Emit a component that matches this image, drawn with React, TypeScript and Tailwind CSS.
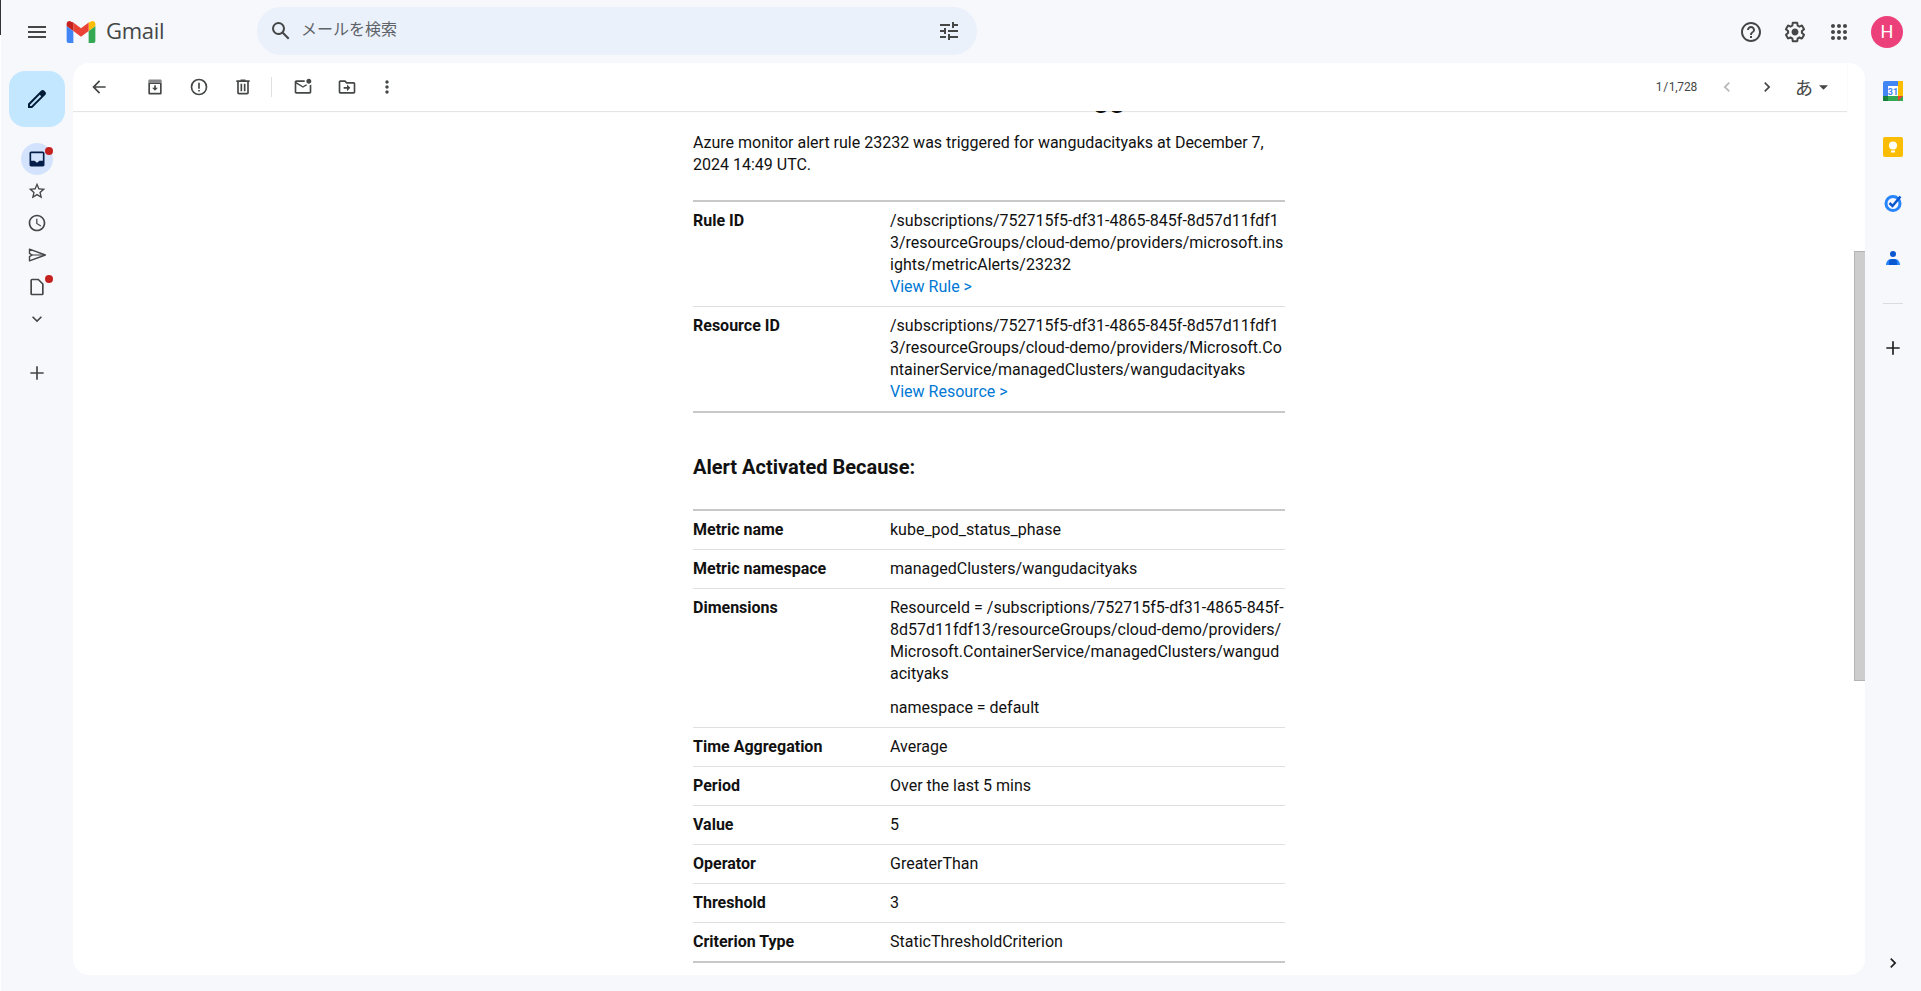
import React from "react";

const I = ({ d, size = 20, className = "", fill = "#444746", vb = "0 0 24 24" }: { d: string; size?: number; className?: string; fill?: string; vb?: string }) => (
  <svg width={size} height={size} viewBox={vb} className={className} fill={fill}><path d={d} fillRule="evenodd" /></svg>
);

const P = {
  menu: "M3 18h18v-2H3v2zm0-5h18v-2H3v2zm0-7v2h18V6H3z",
  search: "M20.49 19l-5.73-5.73C15.53 12.2 16 10.91 16 9.5A6.5 6.5 0 1 0 9.5 16c1.41 0 2.7-.47 3.77-1.24L19 20.49 20.49 19zM5 9.5C5 7.01 7.01 5 9.5 5S14 7.01 14 9.5 11.99 14 9.5 14 5 11.99 5 9.5z",
  tune: "M3 17v2h6v-2H3zM3 5v2h10V5H3zm10 16v-2h8v-2h-8v-2h-2v6h2zM7 9v2H3v2h4v2h2V9H7zm14 4v-2H11v2h10zm-6-4h2V7h4V5h-4V3h-2v6z",
  help: "M11 18h2v-2h-2v2zm1-16C6.48 2 2 6.48 2 12s4.48 10 10 10 10-4.48 10-10S17.52 2 12 2zm0 18c-4.41 0-8-3.59-8-8s3.59-8 8-8 8 3.59 8 8-3.59 8-8 8zm0-14c-2.21 0-4 1.79-4 4h2c0-1.1.9-2 2-2s2 .9 2 2c0 2-3 1.75-3 5h2c0-2.25 3-2.5 3-5 0-2.21-1.79-4-4-4z",
  gear: "M13.85 22.25h-3.7c-.74 0-1.36-.54-1.45-1.27l-.27-1.89c-.27-.14-.53-.29-.79-.46l-1.8.72c-.7.26-1.47-.03-1.81-.65L2.2 15.53c-.35-.66-.2-1.44.36-1.88l1.53-1.19c-.01-.15-.02-.3-.02-.46 0-.15.01-.31.02-.46l-1.52-1.19c-.59-.45-.74-1.26-.37-1.88l1.85-3.19c.34-.62 1.11-.9 1.79-.63l1.81.73c.26-.17.52-.32.78-.46l.27-1.91c.09-.7.71-1.25 1.44-1.25h3.7c.74 0 1.36.54 1.45 1.27l.27 1.89c.27.14.53.29.79.46l1.8-.72c.71-.26 1.48.03 1.82.65l1.84 3.18c.36.66.2 1.44-.36 1.88l-1.52 1.19c.01.15.02.3.02.46s-.01.31-.02.46l1.52 1.19c.56.45.72 1.23.37 1.86l-1.86 3.22c-.34.62-1.11.9-1.8.63l-1.8-.72c-.26.17-.52.32-.78.46l-.27 1.91c-.1.68-.72 1.22-1.46 1.22zm-3.23-2h2.76l.37-2.55.53-.22c.44-.18.88-.44 1.34-.78l.45-.34 2.38.96 1.38-2.4-2.03-1.58.07-.56c.03-.26.06-.51.06-.78s-.03-.53-.06-.78l-.07-.56 2.03-1.58-1.39-2.4-2.39.96-.45-.35c-.42-.32-.87-.58-1.33-.77l-.52-.22-.37-2.55h-2.76l-.37 2.55-.53.21c-.44.19-.88.44-1.34.79l-.45.33-2.38-.95-1.39 2.39 2.03 1.58-.07.56a7 7 0 0 0-.06.79c0 .26.02.53.06.78l.07.56-2.03 1.58 1.38 2.4 2.39-.96.45.35c.43.33.86.58 1.33.77l.53.22.38 2.55zM12 15.5c1.93 0 3.5-1.57 3.5-3.5S13.93 8.5 12 8.5 8.5 10.07 8.5 12s1.57 3.5 3.5 3.5z",
  apps: "M6 8c1.1 0 2-.9 2-2s-.9-2-2-2-2 .9-2 2 .9 2 2 2zm6 12c1.1 0 2-.9 2-2s-.9-2-2-2-2 .9-2 2 .9 2 2 2zm-6 0c1.1 0 2-.9 2-2s-.9-2-2-2-2 .9-2 2 .9 2 2 2zm0-6c1.1 0 2-.9 2-2s-.9-2-2-2-2 .9-2 2 .9 2 2 2zm6 0c1.1 0 2-.9 2-2s-.9-2-2-2-2 .9-2 2 .9 2 2 2zm4-8c0 1.1.9 2 2 2s2-.9 2-2-.9-2-2-2-2 .9-2 2zm-4 2c1.1 0 2-.9 2-2s-.9-2-2-2-2 .9-2 2 .9 2 2 2zm6 6c1.1 0 2-.9 2-2s-.9-2-2-2-2 .9-2 2 .9 2 2 2zm0 6c1.1 0 2-.9 2-2s-.9-2-2-2-2 .9-2 2 .9 2 2 2z",
  pencil: "M20.41 4.94l-1.35-1.35c-.78-.78-2.05-.78-2.83 0L3 16.82V21h4.18L20.41 7.77c.79-.78.79-2.05 0-2.83zM6.41 19H5v-1.36l9.82-9.82 1.41 1.41L6.41 19z",
  back: "M20 11H7.83l5.59-5.59L12 4l-8 8 8 8 1.41-1.41L7.83 13H20v-2z",
  report: "M12 2a10 10 0 1 0 0 20 10 10 0 0 0 0-20zm0 2a8 8 0 1 1 0 16 8 8 0 0 1 0-16zM11 7h2v7h-2zm0 8.5h2v2h-2z",
  trash: "M15 4V3H9v1H4v2h1v13c0 1.1.9 2 2 2h10c1.1 0 2-.9 2-2V6h1V4h-5zM7 6h10v13H7zM9 8h2v9H9zm4 0h2v9h-2z",
  unread: "M22 8.98V18c0 1.1-.9 2-2 2H4c-1.1 0-2-.9-2-2V6c0-1.1.9-2 2-2h10.1c-.06.32-.1.66-.1 1 0 .34.04.68.1 1H4l8 5 3.67-2.29c.47.43 1.02.76 1.63.98L12 13 4 8v10h16V9.9c.74-.15 1.42-.48 2-.92zM16 5c0 1.66 1.34 3 3 3s3-1.34 3-3-1.34-3-3-3-3 1.34-3 3z",
  move: "M20 6h-8l-2-2H4c-1.1 0-1.99.9-1.99 2L2 18c0 1.1.9 2 2 2h16c1.1 0 2-.9 2-2V8c0-1.1-.9-2-2-2zM4 6h5.17l2 2H20v10H4zM12 14H8v-2h4V9l4 4-4 4z",
  more: "M12 8c1.1 0 2-.9 2-2s-.9-2-2-2-2 .9-2 2 .9 2 2 2zm0 2c-1.1 0-2 .9-2 2s.9 2 2 2 2-.9 2-2-.9-2-2-2zm0 6c-1.1 0-2 .9-2 2s.9 2 2 2 2-.9 2-2-.9-2-2-2z",
  left: "M15.41 16.59L10.83 12l4.58-4.59L14 6l-6 6 6 6 1.41-1.41z",
  right: "M8.59 16.59L13.17 12 8.59 7.41 10 6l6 6-6 6-1.41-1.41z",
  down: "M7.41 8.59L12 13.17l4.59-4.58L18 10l-6 6-6-6 1.41-1.41z",
  inbox: "M19 3H5c-1.1 0-2 .9-2 2v14c0 1.1.9 2 2 2h14c1.1 0 2-.9 2-2V5c0-1.1-.9-2-2-2zM19 14h-4l-3 2.5L9 14H5V5h14z",
  star: "M22 9.24l-7.19-.62L12 2 9.19 8.63 2 9.24l5.46 4.73L5.82 21 12 17.27 18.18 21l-1.63-7.03L22 9.24zM12 15.4l-3.76 2.27 1-4.28-3.32-2.88 4.38-.38L12 6.1l1.71 4.04 4.38.38-3.32 2.88 1 4.28L12 15.4z",
  clock: "M11.99 2C6.47 2 2 6.48 2 12s4.47 10 9.99 10C17.52 22 22 17.52 22 12S17.52 2 11.99 2zM12 4c4.42 0 8 3.58 8 8s-3.58 8-8 8-8-3.58-8-8 3.58-8 8-8zM11 7h1.5v5.25l4.5 2.67-.75 1.23L11 13z",
  file: "M14 2H6a2 2 0 0 0-2 2v16a2 2 0 0 0 2 2h12a2 2 0 0 0 2-2V8zM18 20H6V4h7.17L18 8.83z",
  plus: "M20 13h-7v7h-2v-7H4v-2h7V4h2v7h7v2z",
};

const TB = ({ d, size = 20, cls = "w-11", fill }: { d: string; size?: number; cls?: string; fill?: string }) => (
  <button className={`h-11 flex items-center justify-center ${cls}`}><I d={d} size={size} fill={fill} /></button>
);

const ArchiveIcon = () => (
  <button className="h-11 w-11 flex items-center justify-center">
    <svg width="20" height="20" viewBox="0 0 24 24">
      <path d="M4 4.5A1.5 1.5 0 0 1 5.5 3h13A1.5 1.5 0 0 1 20 4.5V7H4z" fill="#85878a" />
      <path d="M4 7h16v12.5A1.5 1.5 0 0 1 18.5 21h-13A1.5 1.5 0 0 1 4 19.5zM6 8.5V19h12V8.5zM11 10v3H8.5l3.5 3.5 3.5-3.5H13v-3z" fill="#444746" fillRule="evenodd" />
    </svg>
  </button>
);

const SendIcon = () => (
  <svg width="20" height="20" viewBox="0 0 24 24" fill="none" stroke="#444746" strokeWidth="1.7" strokeLinejoin="round">
    <path d="M3 5l19 7-19 7v-5l3-2-3-2z" />
    <path d="M6 12h15" strokeWidth="1.3" />
  </svg>
);

const Row = ({ k, children, last }: { k: string; children: React.ReactNode; last?: boolean }) => (
  <div className={`flex py-2 ${last ? "" : "border-b border-[#e0e0e0]"}`}>
    <div className="w-[197px] shrink-0 font-bold">{k}</div>
    <div className="flex-1 min-w-0 break-all">{children}</div>
  </div>
);

const A = ({ children }: { children: React.ReactNode }) => <a className="block text-[#0078d4]">{children}</a>;

const RailItem = ({ d, badge, active, icon }: { d?: string; badge?: boolean; active?: boolean; icon?: React.ReactNode }) => (
  <div className={`relative w-8 h-8 rounded-full flex items-center justify-center ${active ? "bg-[#d3e3fd]" : ""}`}>
    {icon ?? <I d={d as string} size={20} fill={active ? "#041e49" : "#444746"} />}
    {badge && <span className="absolute top-1 right-0 w-2 h-2 rounded-full bg-[#c5221f]" />}
  </div>
);

export default function App() {
  return (
    <div className="relative w-[1921px] h-[991px] bg-[#f6f8fc] overflow-hidden flex flex-col font-['Roboto',sans-serif] text-[#111]">
      <div className="absolute left-0 top-0 w-px h-[35px] bg-[#333]" />
      <div className="absolute left-0 top-[35px] bottom-0 w-px bg-white" />
      <header className="h-[63px] shrink-0 flex items-center">
        <div className="w-[73px] flex justify-center pl-[1px]"><I d={P.menu} size={24} /></div>
        <div className="w-[184px] flex items-center">
          <svg width="30" height="22" viewBox="0 0 30 23" className="-ml-[7px] mr-[10px]">
            <path d="M2 23h5V10.5L0 5.2V21a2 2 0 0 0 2 2z" fill="#4285f4" />
            <path d="M23 23h5a2 2 0 0 0 2-2V5.2l-7 5.3z" fill="#34a853" />
            <path d="M23 1.5v9l7-5.3V3c0-2.4-2.8-3.8-4.8-2.3z" fill="#fbbc04" />
            <path d="M7 10.5V1.5l8 6 8-6v9l-8 6z" fill="#ea4335" />
            <path d="M0 3v2.2l7 5.3v-9L4.8.7C2.8-.8 0 .6 0 3z" fill="#c5221f" />
          </svg>
          <span className="text-[22px] text-[#444746] font-['Open_Sans',sans-serif] tracking-[-0.3px] -mt-[2px]">Gmail</span>
        </div>
        <div className="w-[720px] h-12 rounded-3xl bg-[#eaf1fb] flex items-center pl-[12px] pr-[16px] -mt-[2px]">
          <I d={P.search} size={24} />
          <span className="ml-[8px] flex-1 text-base text-[#5f6368] font-['Noto_Sans_CJK_JP',sans-serif] -mt-[5px]">メールを検索</span>
          <I d={P.tune} size={24} />
        </div>
        <div className="flex-1" />
        <div className="flex items-center">
          <div className="w-11 flex justify-center"><I d={P.help} size={24} /></div>
          <div className="w-11 flex justify-center"><I d={P.gear} size={24} /></div>
          <div className="w-11 flex justify-center"><I d={P.apps} size={24} /></div>
          <div className="w-8 h-8 ml-[10px] mr-[18px] rounded-full bg-[#ec407a] text-white flex items-center justify-center text-[18px]">H</div>
        </div>
      </header>

      <div className="flex-1 flex min-h-0">
        <aside className="w-[73px] shrink-0 flex flex-col items-center pl-[1px]">
          <button className="mt-[8px] w-14 h-14 rounded-2xl bg-[#c2e7ff] flex items-center justify-center"><I d={P.pencil} size={24} fill="#001d35" /></button>
          <div className="mt-4 flex flex-col items-center">
            <RailItem d={P.inbox} active badge />
            <RailItem d={P.star} />
            <RailItem d={P.clock} />
            <RailItem icon={<SendIcon />} />
            <RailItem d={P.file} badge />
            <RailItem d={P.down} />
          </div>
          <div className="mt-[28px]"><I d={P.plus} size={20} /></div>
        </aside>

        <main className="w-[1792px] shrink-0 h-[912px] bg-white rounded-2xl overflow-hidden flex flex-col relative">
          <div className="h-12 shrink-0 flex items-center pl-[4px] pr-[19px] mr-[18px] shadow-[0_1px_1px_rgba(0,0,0,0.1)] z-10 bg-white text-[#444746]">
            <TB d={P.back} />
            <div className="w-[12px]" />
            <ArchiveIcon />
            <TB d={P.report} />
            <TB d={P.trash} />
            <div className="w-px h-5 bg-[#e0e0e0] ml-[6px] mr-[9px]" />
            <TB d={P.unread} />
            <TB d={P.move} />
            <TB d={P.more} cls="w-9" />
            <div className="flex-1" />
            <span className="text-xs text-[#444746] mr-[10px] [word-spacing:-2px] tracking-[-0.2px]">1 / 1,728</span>
            <TB d={P.left} cls="w-10" fill="#b4b6b8" />
            <TB d={P.right} cls="w-10" />
            <span className="ml-[8px] text-[18px] text-[#444746] font-['Noto_Sans_CJK_JP',sans-serif]">あ</span>
            <svg width="9" height="5" viewBox="0 0 10 5" className="ml-[6px]"><path d="M0 0h10L5 5z" fill="#444746" /></svg>
          </div>

          <div className="flex-1 min-h-0 overflow-hidden relative">
            <div className="w-[592px] ml-[620px] text-base leading-[22px] -mt-[31px]">
              <h1 className="text-[28px] leading-[36px] font-bold whitespace-nowrap">Your Azure Monitor alert was triggered</h1>
              <p className="mt-[16px]">Azure monitor alert rule 23232 was triggered for wangudacityaks at December 7, 2024 14:49 UTC.</p>
              <div className="mt-[24px] border-y-2 border-[#c8c8c8]">
                <Row k="Rule ID">
                  /subscriptions/752715f5-df31-4865-845f-8d57d11fdf13/resourceGroups/cloud-demo/providers/microsoft.insights/metricAlerts/23232
                  <A>View Rule &gt;</A>
                </Row>
                <Row k="Resource ID" last>
                  /subscriptions/752715f5-df31-4865-845f-8d57d11fdf13/resourceGroups/cloud-demo/providers/Microsoft.ContainerService/managedClusters/wangudacityaks
                  <A>View Resource &gt;</A>
                </Row>
              </div>
              <h2 className="mt-[40px] text-[20px] leading-[28px] font-bold">Alert Activated Because:</h2>
              <div className="mt-[28px] border-y-2 border-[#c8c8c8]">
                <Row k="Metric name">kube_pod_status_phase</Row>
                <Row k="Metric namespace">managedClusters/wangudacityaks</Row>
                <Row k="Dimensions">
                  ResourceId = /subscriptions/752715f5-df31-4865-845f-8d57d11fdf13/resourceGroups/cloud-demo/providers/Microsoft.ContainerService/managedClusters/wangudacityaks
                  <div className="mt-[12px]">namespace = default</div>
                </Row>
                <Row k="Time Aggregation">Average</Row>
                <Row k="Period">Over the last 5 mins</Row>
                <Row k="Value">5</Row>
                <Row k="Operator">GreaterThan</Row>
                <Row k="Threshold">3</Row>
                <Row k="Criterion Type" last>StaticThresholdCriterion</Row>
              </div>
            </div>
          </div>

          <div className="absolute right-0 top-[188px] w-[11px] h-[430px] bg-[#cdcdcd] border-l border-y border-[#b4b4b4]" />
        </main>

        <aside className="flex-1 flex flex-col items-center relative text-[#1f1f1f]">
          <div className="mt-[18px] flex flex-col items-center gap-[36px]">
            <svg width="20" height="20" viewBox="0 0 20 20"><rect width="20" height="20" rx="2" fill="#4285f4" /><rect x="15" width="5" height="20" fill="#fbbc04" /><rect y="15" width="20" height="5" fill="#34a853" /><rect y="15" width="5" height="5" fill="#188038" /><path d="M15 15h5l-5 5z" fill="#ea4335" /><rect x="5" y="5" width="10" height="10" fill="#fff" /><text x="10" y="13.5" textAnchor="middle" fontSize="9" fontWeight="700" fill="#4285f4" fontFamily="Roboto">31</text></svg>
            <svg width="20" height="20" viewBox="0 0 20 20"><rect width="20" height="20" rx="2" fill="#fbbc04" /><circle cx="10" cy="8.5" r="4" fill="#fff" /><rect x="8" y="13.5" width="4" height="2" fill="#fff" /></svg>
            <svg width="20" height="20" viewBox="0 0 20 20"><circle cx="10" cy="10.5" r="7" fill="none" stroke="#2684fc" strokeWidth="3" /><path d="M6.5 10l3 3 8-9.5" fill="none" stroke="#0b57d0" strokeWidth="2.5" /></svg>
            <svg width="20" height="20" viewBox="0 0 20 20"><circle cx="10" cy="5" r="3" fill="#0b57d0" /><path d="M3 16c0-3 2-6 5-6h4c3 0 5 3 5 6z" fill="#2684fc" /><path d="M6 16v-3c0-2 1-3 4-3s4 1 4 3v3z" fill="#0b57d0" /></svg>
          </div>
          <div className="mt-[34px] w-5 h-px bg-[#dadce0]" />
          <div className="mt-[34px]"><I d={P.plus} size={20} fill="#1f1f1f" /></div>
          <div className="absolute top-[890px] left-[18px]"><I d={P.right} size={20} fill="#1f1f1f" /></div>
        </aside>
      </div>
    </div>
  );
}
